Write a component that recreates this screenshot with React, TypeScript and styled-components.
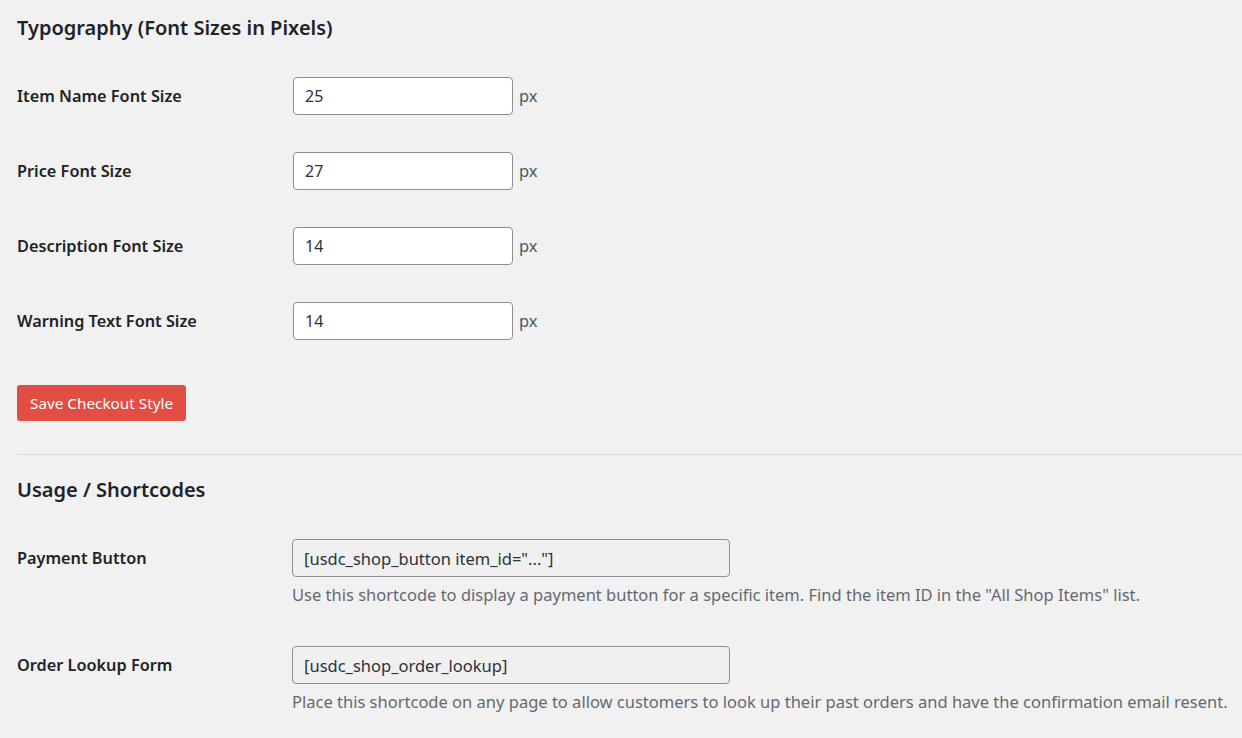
import React from "react";
import styled, { createGlobalStyle } from "styled-components";

const Global = createGlobalStyle`
  html, body { margin: 0; padding: 0; background: #f1f1f1; }
  body { font-family: "Noto Sans", "Open Sans", sans-serif; color: #1d2327; }
`;

const Page = styled.div`
  padding: 0 0 0 17px;
  width: 1225px;
`;

const Heading = styled.h2`
  margin: 0;
  font-size: 20px;
  font-weight: 600;
  line-height: 24px;
  color: #1d2327;
  padding-top: 16px;
  height: 42px;
`;

const Row = styled.div`
  display: grid;
  grid-template-columns: 276px 1fr;
  align-items: center;
  height: 75px;
`;

const Label = styled.div`
  font-size: 16.3px;
  font-weight: 600;
  line-height: 38px;
`;

const Field = styled.div`
  display: flex;
  align-items: center;
  gap: 6px;
`;

const NumberInput = styled.input`
  box-sizing: border-box;
  width: 220px;
  height: 38px;
  border: 1px solid #8c8f94;
  border-radius: 4px;
  background: #fff;
  padding: 0 11px;
  font-family: inherit;
  font-size: 16px;
  color: #2c3338;
  outline: none;
`;

const Unit = styled.span`
  font-size: 16.5px;
  color: #50575e;
`;

const Button = styled.button`
  margin-top: 27px;
  height: 36px;
  padding: 0 13px;
  background: #e24d44;
  color: #fff;
  border: none;
  border-radius: 3px;
  font-family: inherit;
  font-size: 15.3px;
`;

const Divider = styled.hr`
  border: none;
  border-top: 1px solid #dcdcde;
  margin: 33px 0 0 0;
`;

const SubHeading = styled(Heading)`
  padding-top: 23px;
  height: 48px;
`;

const ShortList = styled.div`
  display: flex;
  flex-direction: column;
  gap: 39px;
  padding-top: 13px;
`;

const ShortRow = styled.div`
  display: grid;
  grid-template-columns: 275px 1fr;
  align-items: start;
`;

const ShortField = styled.div`
  display: flex;
  flex-direction: column;
`;

const TextInput = styled.input`
  box-sizing: border-box;
  width: 438px;
  height: 38px;
  border: 1px solid #8c8f94;
  border-radius: 4px;
  background: #f0f0f1;
  padding: 0 11px;
  font-family: inherit;
  font-size: 16.5px;
  color: #2c3338;
  outline: none;
`;

const Desc = styled.p`
  margin: 6px 0 0 0;
  font-size: 16.5px;
  line-height: 24px;
  color: #646970;
  white-space: nowrap;
`;

const sizes = [
  ["Item Name Font Size", "25"],
  ["Price Font Size", "27"],
  ["Description Font Size", "14"],
  ["Warning Text Font Size", "14"],
];

const shortcodes = [
  {
    label: "Payment Button",
    code: '[usdc_shop_button item_id="..."]',
    desc: 'Use this shortcode to display a payment button for a specific item. Find the item ID in the "All Shop Items" list.',
  },
  {
    label: "Order Lookup Form",
    code: "[usdc_shop_order_lookup]",
    desc: "Place this shortcode on any page to allow customers to look up their past orders and have the confirmation email resent.",
  },
];

export default function App() {
  return (
    <Page>
      <Global />
      <Heading>Typography (Font Sizes in Pixels)</Heading>
      {sizes.map(([l, v]) => (
        <Row key={l}>
          <Label>{l}</Label>
          <Field>
            <NumberInput defaultValue={v} />
            <Unit>px</Unit>
          </Field>
        </Row>
      ))}
      <Button>Save Checkout Style</Button>
      <Divider />
      <SubHeading>Usage / Shortcodes</SubHeading>
      <ShortList>
        {shortcodes.map((s) => (
          <ShortRow key={s.label}>
            <Label>{s.label}</Label>
            <ShortField>
              <TextInput readOnly value={s.code} />
              <Desc>{s.desc}</Desc>
            </ShortField>
          </ShortRow>
        ))}
      </ShortList>
    </Page>
  );
}
